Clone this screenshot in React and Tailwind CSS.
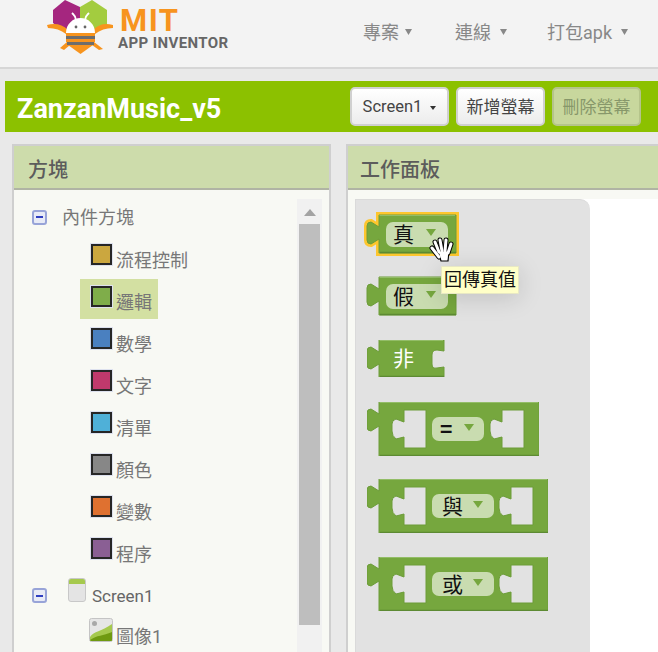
import React from "react";

const Caret = ({ className = "", color = "#888", w = 7, h = 6, up }) => (
  <svg width={w} height={h} viewBox="0 0 7 6" preserveAspectRatio="none" className={className}>
    <path d={up ? "M0 6H7L3.5 0Z" : "M0 0H7L3.5 6Z"} fill={color} />
  </svg>
);

const Logo = () => (
  <svg width="70" height="56" viewBox="0 0 70 56" className="shrink-0">
    <path d="M6 10L18 0L33 7V23L18 32L6 23Z" fill="#a5267f" />
    <path d="M33 7L45 0L60 10V25L48 32L33 23Z" fill="#a3cc3f" />
    <path d="M0 25C8 23 15 24 21 30L19 34C14 30 8 28 1 28Z" fill="#f7941e" />
    <path d="M66 25C58 23 52 24 46 30L48 34C53 30 59 28 66 28Z" fill="#f7941e" />
    <path d="M13 48L20 42L23 45L17 50Z" fill="#f7941e" />
    <path d="M56 49L47 42L45 45L52 50Z" fill="#f7941e" />
    <path d="M25 13C27 15 29 16 29 20" stroke="#fff" strokeWidth="1.8" fill="none" />
    <path d="M42 13C40 15 38 16 38 20" stroke="#fff" strokeWidth="1.8" fill="none" />
    <path d="M19 33C19 24 26 18 33.5 18C41 18 48 24 48 33Z" fill="#fff" />
    <circle cx="29" cy="27" r="1.4" fill="#666" />
    <circle cx="38" cy="27" r="1.4" fill="#666" />
    <path d="M19 33H48V36H19Z" fill="#f7941e" />
    <path d="M19 36H48V39H19Z" fill="#6d6d6d" />
    <path d="M19 39H48V42H19Z" fill="#f7941e" />
    <path d="M20 42H47V45H20Z" fill="#6d6d6d" />
    <path d="M21 45H46L33.5 54Z" fill="#f7941e" />
  </svg>
);

const tab = "V24 L4,29 Q0,29 0,25 V11 Q0,7 4,7 L12,12 V0";
const socket = (x, y) =>
  `M${x + 34},${y} V${y + 38} H${x + 12} V${y + 27} L${x + 4},${y + 29} Q${x},${y + 26} ${x},${y + 21} V${y + 14} Q${x},${y + 10} ${x + 4},${y + 9} L${x + 12},${y + 12} V${y} Z`;

const Piece = ({ w, h, extra = "", right, highlight }) => {
  const outline = right
    ? `M12,0 H${w + 12} V11 L${w + 5},10 Q${w},10 ${w},15 V24 Q${w},29 ${w + 5},28 L${w + 12},27 V${h} H12 ${tab} Z`
    : `M12,0 H${w + 12} V${h} H12 ${tab} Z`;
  return (
    <>
      {highlight && <path d={outline} fill="none" stroke="#fdc62e" strokeWidth="6" />}
      <path d={outline + extra} fill="#76a73e" fillRule="evenodd" stroke="#6c9c39" strokeWidth="1" />
      <path d={`M12.5,0.5 H${w + 11}`} stroke="#93bd67" strokeWidth="1" />
      <path d={`M13,${h - 0.5} H${w + 12}`} stroke="#5d8a33" strokeWidth="1.5" />
    </>
  );
};

const Pill = ({ x, y, w = 62, label, textX, arrowX, h = 25 }) => (
  <>
    <rect x={x} y={y} width={w} height={h} rx="7" fill="#c9dcb0" />
    <text x={textX} y={y + 20} fontSize="21" fill="#111" fontFamily="'Noto Sans CJK TC',sans-serif">{label}</text>
    <path d={`M${arrowX - 5},${y + 7} h10 l-5,7 Z`} fill="#76a73e" />
  </>
);

const SmallBlock = ({ label, top, highlight }) => (
  <svg width="90" height="38" viewBox="0 0 90 38" className="block overflow-visible" style={{ marginTop: top }}>
    <Piece w={77} h={38} highlight={highlight} />
    <Pill x={19} y={7} label={label} textX={26} arrowX={64} />
  </svg>
);

const BigBlock = ({ label, width, top, pillW, arrowX, textX, fontBold }) => {
  const rightWin = width - 49 + 12;
  const extra = ` ${socket(25, 8)} ${socket(rightWin - 12 + 12 - 12 + 12, 8)}`;
  return (
    <svg width={width + 12} height="54" viewBox={`0 0 ${width + 12} 54`} className="block" style={{ marginTop: top }}>
      <Piece w={width} h={54} extra={extra} />
      <rect x="65" y="15" width={pillW} height="24" rx="7" fill="#c9dcb0" />
      <text x={textX} y="35" fontSize="21" fontWeight={fontBold ? 700 : 400} fill="#111" fontFamily="'Noto Sans CJK TC',sans-serif">{label}</text>
      <path d={`M${arrowX - 5},22 h10 l-5,7 Z`} fill="#76a73e" />
    </svg>
  );
};

const NotBlock = () => (
  <svg width="78" height="37" viewBox="0 0 78 37" className="block" style={{ marginTop: 25 }}>
    <Piece w={65} h={37} right />
    <text x="26" y="26" fontSize="21" fill="#fff" fontFamily="'Noto Sans CJK TC',sans-serif">非</text>
  </svg>
);

const Swatch = ({ color }) => (
  <span className="block w-[23px] h-[23px] border border-[#dde1ee] shrink-0">
    <span className="block w-full h-full border-2 border-[#262626]" style={{ backgroundColor: color }} />
  </span>
);

const Minus = () => (
  <span className="flex items-center justify-center w-[15px] h-[15px] rounded-[3px] border-2 border-[#98a4d8] bg-[#e8ebf6] shrink-0">
    <span className="block w-[7px] h-[2px] bg-[#2f3fc0]" />
  </span>
);

const builtins = [
  ["流程控制", "#cba73f"],
  ["邏輯", "#7fad4a", true],
  ["數學", "#4a80c0"],
  ["文字", "#c0396c"],
  ["清單", "#4fb0d8"],
  ["顏色", "#878787"],
  ["變數", "#df7130"],
  ["程序", "#8a5f94"],
];

const Hand = () => (
  <svg width="26" height="28" viewBox="0 0 26 28" className="absolute left-[429px] top-[237px]">
    <g fill="none" strokeLinecap="round" stroke="#000" strokeWidth="5">
      <path d="M3,11 L10,20" />
      <path d="M6,5 L10,15" />
      <path d="M11,3 L13,14" />
      <path d="M17,3 L16,14" />
      <path d="M22,7 L19,16" />
    </g>
    <path d="M9,14 H20 L19,24 H12 Z" fill="#fff" stroke="#000" strokeWidth="1.2" />
    <g fill="none" strokeLinecap="round" stroke="#fff" strokeWidth="3">
      <path d="M3,11 L10,20" />
      <path d="M6,5 L10,15" />
      <path d="M11,3 L13,14" />
      <path d="M17,3 L16,14" />
      <path d="M22,7 L19,16" />
    </g>
    <path d="M10,15 H19 L18,23 H13 Z" fill="#fff" />
  </svg>
);

const PanelHeader = ({ children, pad }) => (
  <div className={`h-[44px] shrink-0 bg-[#cddcab] border-b-2 border-[#b0b4a4] flex items-center pt-[5px] text-[20px] font-medium text-[#5c5c5c] ${pad}`}>
    {children}
  </div>
);

const Btn = ({ children, disabled, w }) => (
  <div
    className={`h-[39px] flex items-center justify-center pt-[2px] rounded-[5px] border-2 text-[17px] ${w} ${
      disabled
        ? "bg-[#c8d79d] border-[#b5c48b] text-[#87976a]"
        : "bg-gradient-to-b from-white to-[#ececec] border-[#d0d0d0] text-[#444]"
    }`}
  >
    {children}
  </div>
);

export default function App() {
  return (
    <div className="relative w-[658px] h-[652px] overflow-hidden bg-[#e9e9e9] flex flex-col font-['Roboto','Noto_Sans_CJK_TC',sans-serif]">
      <header className="h-[69px] shrink-0 bg-[#f3f3f3] border-b-2 border-[#d6d6d6] flex items-start">
        <div className="ml-[47px] flex w-[184px] shrink-0">
          <Logo />
          <div className="flex flex-col ml-[1px]">
            <span className="text-[31px] leading-[27px] mt-[7px] ml-[2px] font-bold text-[#f7941e] tracking-[1.5px]">MIT</span>
            <span className="text-[15px] leading-[15px] mt-[2px] font-bold text-[#666] tracking-[0.4px] whitespace-nowrap">APP INVENTOR</span>
          </div>
        </div>
        <nav className="flex items-center h-[64px] text-[18px] text-[#888] ml-[132px]">
          <span>專案</span>
          <Caret className="ml-[6px]" />
          <span className="ml-[43px]">連線</span>
          <Caret className="ml-[9px]" />
          <span className="ml-[40px]">打包apk</span>
          <Caret className="ml-[9px]" />
        </nav>
      </header>

      <div className="mt-[12px] ml-[5px] h-[51px] shrink-0 bg-[#8cc100] flex items-center">
        <h1 className="ml-[12px] pt-[5px] text-[27px] font-bold text-white leading-none w-[333px] shrink-0">ZanzanMusic_v5</h1>
        <div className="flex gap-[7px] items-center">
          <Btn w="w-[99px]">
            <span className="text-[16.5px]">Screen1</span>
            <Caret className="ml-[8px]" color="#333" w={6} h={4} />
          </Btn>
          <Btn w="w-[89px]">新增螢幕</Btn>
          <Btn w="w-[89px]" disabled>刪除螢幕</Btn>
        </div>
      </div>

      <div className="mt-[12px] flex-1 min-h-0 flex pl-[12px] gap-[15px]">
        <section className="w-[319px] border-x-2 border-t-2 border-[#cfcfcf] flex flex-col min-h-0">
          <PanelHeader pad="pl-[14px]">方塊</PanelHeader>
          <div className="flex-1 min-h-0 bg-[#f8f9f4] flex overflow-hidden">
            <div className="w-[283px] pt-[7px] text-[18px] text-[#777]">
              <div className="h-[40px] flex items-center pl-[18px]">
                <Minus />
                <span className="ml-[15px]">內件方塊</span>
              </div>
              {builtins.map(([label, color, active]) => (
                <div key={label} className="h-[42px]">
                  <div className={`h-[40px] ml-[66px] w-[78px] flex pl-[10px] ${active ? "bg-[#d3e0a2]" : ""}`}>
                    <div className="mt-[6px]"><Swatch color={color} /></div>
                    <span className="ml-[3px] mt-[11px] leading-[26px] whitespace-nowrap">{label}</span>
                  </div>
                </div>
              ))}
              <div className="h-[42px] flex pl-[18px]">
                <div className="mt-[15px]"><Minus /></div>
                <svg width="18" height="24" viewBox="0 0 18 24" className="ml-[21px] mt-[5px]">
                  <rect x="0.5" y="0.5" width="17" height="23" rx="2.5" fill="#e4e4e4" stroke="#c8c8c8" />
                  <path d="M1 3a2 2 0 0 1 2-2h12a2 2 0 0 1 2 2v3H1Z" fill="#a5c94d" />
                </svg>
                <span className="ml-[6px] mt-[10px] text-[17px] leading-[26px] text-[#666]">Screen1</span>
              </div>
              <div className="h-[42px] flex pl-[75px]">
                <svg width="24" height="24" viewBox="0 0 24 24" className="mt-[3px]">
                  <rect x="0.5" y="0.5" width="23" height="23" rx="2" fill="#e6e6e6" stroke="#c4c4c4" />
                  <circle cx="5.5" cy="5.5" r="2.5" fill="#a8a8a8" />
                  <path d="M1 19C5 13 12 14 23 6V22a1 1 0 0 1-1 1H2a1 1 0 0 1-1-1Z" fill="#a5c94d" />
                  <path d="M1 22C8 17 14 18 23 14V22a1 1 0 0 1-1 1H2Z" fill="#6f9a10" />
                </svg>
                <span className="ml-[3px] mt-[9px] leading-[26px] whitespace-nowrap">圖像1</span>
              </div>
            </div>
            <div className="mt-[9px] w-[25px] shrink-0 bg-[#f1f1f1] flex flex-col items-center">
              <Caret className="mt-[10px]" color="#a3a3a3" w={12} h={7} up />
              <div className="mt-[8px] w-[21px] h-[401px] bg-[#bebebe]" />
            </div>
          </div>
        </section>

        <section className="flex-1 min-w-0 border-l-2 border-t-2 border-[#cfcfcf] flex flex-col min-h-0">
          <PanelHeader pad="pl-[12px]">工作面板</PanelHeader>
          <div className="flex-1 min-h-0 bg-[#f8f9f4] pt-[9px] pl-[7px]">
            <div className="h-full bg-white">
              <div className="w-[235px] h-full bg-[#e2e2e2] rounded-tr-[10px] border-l border-t border-[#dadada] pl-[11px] pt-[15px]">
                <SmallBlock label="真" top={0} highlight />
                <SmallBlock label="假" top={24} />
                <NotBlock />
                <BigBlock label="=" width={160} top={25} pillW={52} arrowX={102} textX={73} fontBold />
                <BigBlock label="與" width={169} top={23} pillW={62} arrowX={111} textX={75} />
                <BigBlock label="或" width={169} top={24} pillW={62} arrowX={111} textX={75} />
              </div>
            </div>
          </div>
        </section>
      </div>

      <div className="absolute left-[441px] top-[266px] w-[78px] h-[28px] bg-[#ffffc7] border border-[#e8e8c4] shadow-[0_4px_24px_rgba(0,0,0,0.15)] flex items-center justify-center text-[18px] leading-none text-[#111] whitespace-nowrap">
        回傳真值
      </div>
      <Hand />
    </div>
  );
}
